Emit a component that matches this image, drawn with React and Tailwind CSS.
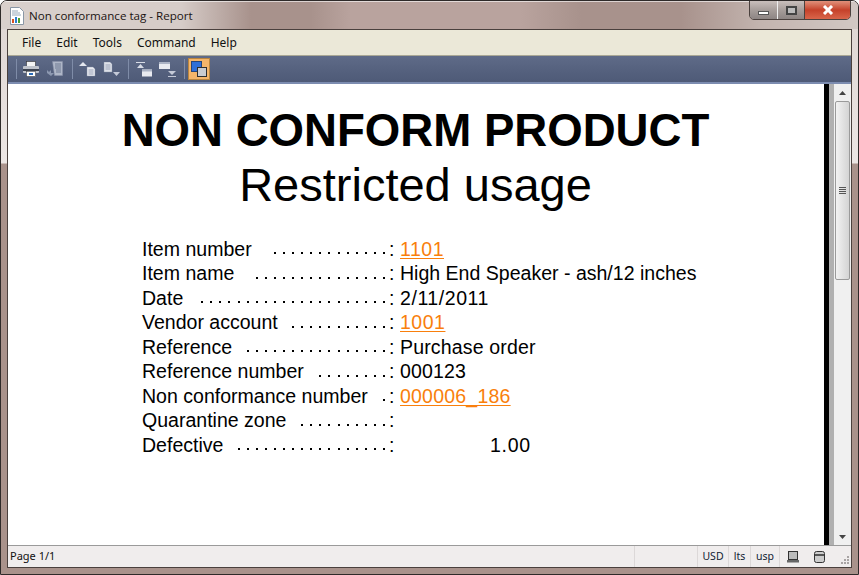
const rows = [
  ["Item number", 13, "1101", true, "tracking-[0.5px]"],
  ["Item name", 15, "High End Speaker - ash/12 inches", false, ""],
  ["Date", 21, "2/11/2011", false, "tracking-[0.55px]"],
  ["Vendor account", 11, "1001", true, "tracking-[0.5px]"],
  ["Reference", 16, "Purchase order", false, "tracking-[0.15px]"],
  ["Reference number", 8, "000123", false, "tracking-[0.15px]"],
  ["Non conformance number", 1, "000006_186", true, "tracking-[0.2px]"],
  ["Quarantine zone", 10, "", false, ""],
  ["Defective", 17, "", false, ""],
];

function Tool({ children, className = "" }) {
  return <div className={"w-[24px] h-[22px] flex items-center justify-center " + className}>{children}</div>;
}
const Sep = ({ className = "" }) => <div className={"w-px h-[20px] bg-[#7f8ca8] " + className} />;

export default function App() {
  return (
    <div className="w-[859px] h-[575px] overflow-hidden flex flex-col border border-[#2e2a29] rounded-t-[7px] bg-[linear-gradient(to_bottom,#ddd4d1_0px,#ece6e4_162px,#a9928b_163px,#a9928b_100%)]" style={{ fontFamily: '"Liberation Sans", sans-serif' }}>
      <div className="h-[28px] flex items-start shrink-0 pl-[8px] pr-[7px] border-t border-white/60 bg-[linear-gradient(to_right,#d9d0cc_0px,#d6ccc8_180px,#a8928c_250px,#a8928c_310px,#b9a39e_350px,#b9a39e_520px,#a8928c_580px,#a8928c_680px,#c3b4af_760px,#d2c8c4_859px)]">
        <svg width="16" height="18" viewBox="0 0 16 18" className="mt-[5px]">
          <path d="M1.5 .5h9l4 4v13h-13z" fill="#fff" stroke="#8a97a6" />
          <path d="M3 4h6M3 6h8M3 8h9" stroke="#9ab" />
          <rect x="3" y="12" width="2" height="4" fill="#d9501e" />
          <rect x="6" y="10" width="2" height="6" fill="#2f7fd0" />
          <rect x="9" y="11" width="2" height="5" fill="#4aa02c" />
        </svg>
        <div className="ml-[4px] mt-[6px] text-[11.6px] leading-[16px] text-[#1c1412] whitespace-nowrap" style={{ fontFamily: '"Open Sans", sans-serif' }}>Non conformance tag - Report</div>
        <div className="ml-auto flex h-[20px] -mt-[2px] border border-[#4b413e] rounded-b-[5px] overflow-hidden">
          <div className="w-[28px] bg-gradient-to-b from-[#c9bfbc] via-[#a69d9a] to-[#8d8583] border-r border-[#eee] flex items-center justify-center">
            <div className="w-[11px] h-[4px] bg-white border border-[#555] mt-[5px]" />
          </div>
          <div className="w-[27px] bg-gradient-to-b from-[#c9bfbc] via-[#a69d9a] to-[#8d8583] border-r border-[#4b413e] flex items-center justify-center">
            <div className="w-[11px] h-[9px] bg-[#bbb] border-2 border-[#444]" />
          </div>
          <div className="w-[45px] bg-gradient-to-b from-[#e0907a] via-[#c5412a] to-[#d9654a] flex items-center justify-center">
            <svg width="12" height="10" viewBox="0 0 12 10"><path d="M2 1l8 8M10 1l-8 8" stroke="#fff" strokeWidth="3" /></svg>
          </div>
        </div>
      </div>
      <div className="flex-1 min-h-0 mx-[6px] flex flex-col border-t border-x border-[#4a403d] bg-white">
        <div className="h-[26px] shrink-0 bg-[#ebe8d8] flex items-center pl-[14px] gap-[15px] text-[12px] text-[#111] border-b border-[#a9a795]" style={{ fontFamily: '"Noto Sans", sans-serif' }}>
          <span>File</span><span>Edit</span><span>Tools</span><span>Command</span><span>Help</span>
        </div>
        <div className="h-[28px] shrink-0 bg-gradient-to-b from-[#5f6b88] via-[#56627f] to-[#4e5a77] border-b-2 border-[#7c8cb0] flex items-center pl-[8px]">
          <Sep />
          <Tool className="ml-[2px]"><svg width="16" height="16" viewBox="0 0 16 16"><rect x="3.5" y=".5" width="9" height="5" fill="#f4f4f4" stroke="#333" strokeWidth=".6" /><rect x="0" y="5" width="16" height="7" rx="1" fill="#bfc3cb" /><rect x="0" y="8" width="16" height="2" fill="#3c4350" /><rect x="3.5" y="10.5" width="9" height="5" fill="#fff" stroke="#333" strokeWidth=".5" /><rect x="6" y="12" width="4" height="2" fill="#2b6cb8" /></svg></Tool>
          <Tool><svg width="16" height="16" viewBox="0 0 16 16"><path d="M5.5 .5h10v14h-8z" fill="#aeb6c7" stroke="#8a93a8" strokeWidth=".5" /><path d="M8 3h6M8 5h6M8 7h6M9 9h5M9 11h5" stroke="#6f7a93" /><path d="M0 9l2 2 2-2v3h3l-3 3-4-3z" fill="#8c98b0" /></svg></Tool>
          <Sep className="ml-[5px]" />
          <Tool className="ml-[2px]"><svg width="17" height="15" viewBox="0 0 17 15"><path d="M0 4l4-4 4 4z" fill="#e3e6ee" /><path d="M8 5h6l2 2v7H8z" fill="#e8eaf0" stroke="#8a93a8" strokeWidth=".4" /><path d="M9.5 8h5M9.5 10h5M9.5 12h5" stroke="#9aa3b8" /></svg></Tool>
          <Tool><svg width="17" height="15" viewBox="0 0 17 15"><path d="M1 0h6l2 2v8H1z" fill="#dde0e8" stroke="#8a93a8" strokeWidth=".4" /><path d="M2.5 3h5M2.5 5h5M2.5 7h5" stroke="#9aa3b8" /><path d="M10 10h7l-3.500 4z" fill="#c5cad8" /></svg></Tool>
          <Sep className="ml-[5px]" />
          <Tool className="ml-[2px]"><svg width="17" height="15" viewBox="0 0 17 15"><path d="M1 0h9v1H1zM2 6l3.500-4 3.500 4z" fill="#d8dce6" /><rect x="7" y="7.500" width="10" height="7" fill="#e8eaf0" /><rect x="7" y="7.500" width="10" height="2" fill="#aab2c4" /></svg></Tool>
          <Tool><svg width="17" height="15" viewBox="0 0 17 15"><rect x="0" y="0" width="11" height="7" fill="#e8eaf0" /><rect x="0" y="0" width="11" height="2" fill="#aab2c4" /><path d="M9 9h8l-4 4zM9 14h8v1H9z" fill="#c5cad8" /></svg></Tool>
          <Sep className="ml-[5px]" />
          <div className="ml-[3px] w-[22px] h-[22px] flex items-center justify-center bg-[#f4b56a] border border-[#b9853f]">
            <svg width="16" height="16" viewBox="0 0 16 16"><rect x=".5" y=".5" width="10" height="10" fill="#2f6fd8" stroke="#26457a" /><rect x="6.500" y="6.500" width="9" height="9" fill="#c9cbcf" stroke="#2e2e2e" /></svg>
          </div>
        </div>
        <div className="flex-1 min-h-0 flex bg-white border-b border-[#9a9a9a]">
          <div className="flex-1 min-w-0 pt-[19px] text-black">
            <div className="w-[815px] text-center text-[45.6px] leading-[56px] font-bold whitespace-nowrap">NON CONFORM PRODUCT</div>
            <div className="w-[815px] text-center text-[47px] leading-[54px] whitespace-nowrap -mt-[1px]">Restricted usage</div>
            <div className="pl-[134px] pt-[24.6px] text-[19.55px]">
              {rows.map(([l, n, v, link, track], i) => (
                <div key={i} className="h-[24.5px] leading-[24.5px] flex whitespace-nowrap">
                  <div className="w-[246px] shrink-0 flex justify-between pr-[3px]">
                    <span>{l}</span>
                    <span className="flex items-center gap-[4px]">
                      {Array.from({ length: n }).map((_, k) => (
                        <i key={k} className="w-[2px] h-[2px] bg-black mt-[9px] ml-[3.1px]" />
                      ))}
                    </span>
                  </div>
                  <span className="w-[12px] shrink-0 pl-[1px]">:</span>
                  {v ? <span className={track + " " + (link ? "text-[#f97f0c] underline underline-offset-2 decoration-1" : "")}>{v}</span> : null}
                  {l === "Defective" ? <span className="ml-[90px] tracking-[0.7px]">1.00</span> : null}
                </div>
              ))}
            </div>
          </div>
          <div className="w-[5px] bg-black shrink-0" />
          <div className="w-[5px] bg-[#b0b0b0] shrink-0" />
          <div className="w-[17px] shrink-0 bg-[#f0f0f0] flex flex-col items-center">
            <div className="h-[17px] flex items-center justify-center"><svg width="7" height="4"><path d="M3.5 0L7 4H0z" fill="#444" /></svg></div>
            <div className="w-[15px] h-[179px] border border-[#9a9a9a] rounded-[2px] bg-gradient-to-r from-[#f2f2f2] to-[#d4d4d4] flex items-center justify-center">
              <div className="w-[7px] h-[7px] flex flex-col justify-between"><i className="h-px bg-[#555]" /><i className="h-px bg-[#555]" /><i className="h-px bg-[#555]" /><i className="h-px bg-[#555]" /></div>
            </div>
            <div className="mt-auto h-[17px] flex items-center justify-center"><svg width="7" height="4"><path d="M0 0h7L3.5 4z" fill="#444" /></svg></div>
          </div>
        </div>
        <div className="h-[22px] shrink-0 bg-[#f0eded] flex items-center text-[11px] text-[#111] border-b border-[#4a403d]" style={{ fontFamily: '"Noto Sans", sans-serif' }}>
          <div className="pl-[2px] w-[626px] shrink-0">Page 1/1</div>
          <div className="w-[63px] shrink-0 h-full border-l border-[#dcd8d8]" />
          <div className="w-[31px] shrink-0 h-full border-l border-[#dcd8d8] flex items-center justify-center text-[#123] text-[10.5px]">USD</div>
          <div className="w-[22px] shrink-0 h-full border-l border-[#dcd8d8] flex items-center justify-center text-[#123] text-[10.5px]">lts</div>
          <div className="w-[29px] shrink-0 h-full border-l border-[#dcd8d8] flex items-center justify-center text-[#123] text-[10.5px]">usp</div>
          <div className="flex-1 min-w-0 h-full border-l border-[#dcd8d8] flex items-center pl-[7px] gap-[15px]">
            <svg width="12" height="12" viewBox="0 0 12 12"><rect x="1.500" y=".5" width="9" height="8" fill="#bbb" stroke="#333" /><rect x="0" y="9" width="12" height="2.500" fill="#666" /></svg>
            <svg width="11" height="12" viewBox="0 0 11 12"><rect x=".5" y=".5" width="10" height="11" rx="2" fill="#ccc" stroke="#333" /><rect x="1" y="3" width="9" height="2" fill="#555" /></svg>
            <svg className="ml-auto mr-[1px] self-end mb-[2px]" width="9" height="9" viewBox="0 0 9 9" fill="#a9a4a4"><rect x="6" y="0" width="2" height="2" /><rect x="3" y="3" width="2" height="2" /><rect x="6" y="3" width="2" height="2" /><rect x="0" y="6" width="2" height="2" /><rect x="3" y="6" width="2" height="2" /><rect x="6" y="6" width="2" height="2" /></svg>
          </div>
        </div>
      </div>
      <div className="h-[6px] shrink-0" />
    </div>
  );
}
